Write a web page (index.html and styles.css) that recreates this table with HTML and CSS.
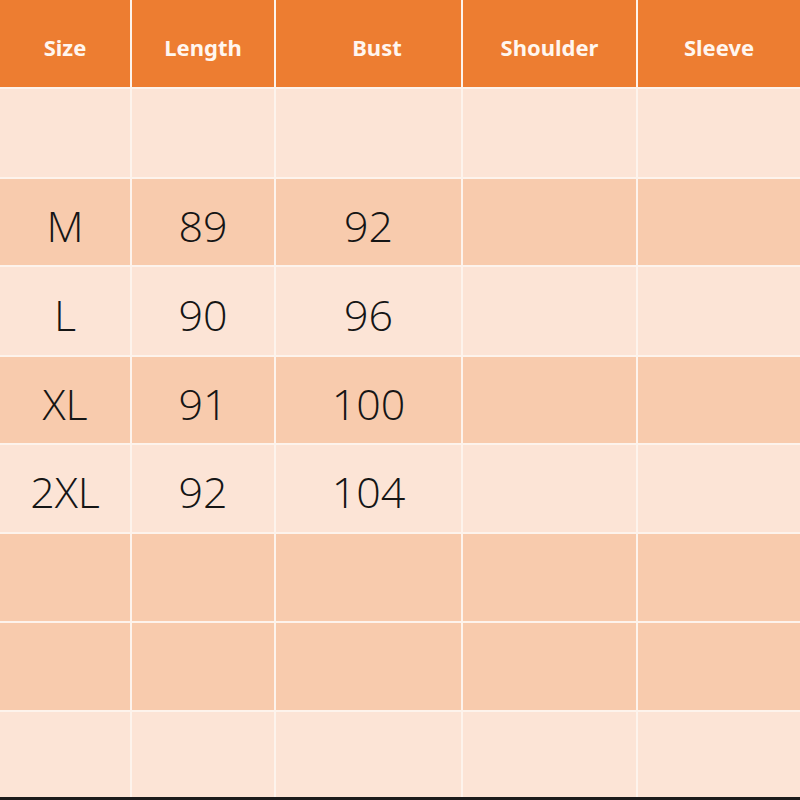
FILE: index.html
```html
<!DOCTYPE html>
<html>
<head>
<meta charset="utf-8">
<link rel="stylesheet" href="styles.css">
</head>
<body>
<div class="chart">
  <div class="cell head">Size</div>
  <div class="cell head">Length</div>
  <div class="cell head head-bust">Bust</div>
  <div class="cell head">Shoulder</div>
  <div class="cell head">Sleeve</div>

  <div class="cell light"></div><div class="cell light"></div><div class="cell light"></div><div class="cell light"></div><div class="cell light"></div>

  <div class="cell dark">M</div><div class="cell dark">89</div><div class="cell dark">92</div><div class="cell dark"></div><div class="cell dark"></div>

  <div class="cell light">L</div><div class="cell light">90</div><div class="cell light">96</div><div class="cell light"></div><div class="cell light"></div>

  <div class="cell dark">XL</div><div class="cell dark">91</div><div class="cell dark">100</div><div class="cell dark"></div><div class="cell dark"></div>

  <div class="cell light">2XL</div><div class="cell light">92</div><div class="cell light">104</div><div class="cell light"></div><div class="cell light"></div>

  <div class="cell dark"></div><div class="cell dark"></div><div class="cell dark"></div><div class="cell dark"></div><div class="cell dark"></div>

  <div class="cell dark"></div><div class="cell dark"></div><div class="cell dark"></div><div class="cell dark"></div><div class="cell dark"></div>

  <div class="cell light"></div><div class="cell light"></div><div class="cell light"></div><div class="cell light"></div><div class="cell light"></div>
</div>
</body>
</html>
```

FILE: styles.css
```css
html, body {
  margin: 0;
  padding: 0;
  background: #ffffff;
}

.chart {
  width: 800px;
  height: 797px;
  display: grid;
  grid-template-columns: 130px 142px 185px 173px 162px;
  grid-template-rows: 87px 88px 86px 88px 86px 87px 87px 87px 85px;
  gap: 2px;
  background: #fdf3ec;
  border-bottom: 3px solid #1c1c1c;
}

.cell {
  display: flex;
  align-items: center;
  justify-content: center;
  font-family: "Open Sans", "Noto Sans", sans-serif;
  font-weight: 300;
  font-size: 43px;
  color: #151515;
  padding-top: 6px;
  box-sizing: border-box;
}

.head {
  background: #ed7d31;
  color: #fff6ef;
  font-family: "Noto Sans", "Open Sans", sans-serif;
  font-weight: 700;
  font-size: 22px;
  padding-top: 12px;
  padding-bottom: 6px;
}

.head-bust {
  padding-left: 17px;
}

.light {
  background: #fce4d6;
}

.dark {
  background: #f8cbad;
}
```
